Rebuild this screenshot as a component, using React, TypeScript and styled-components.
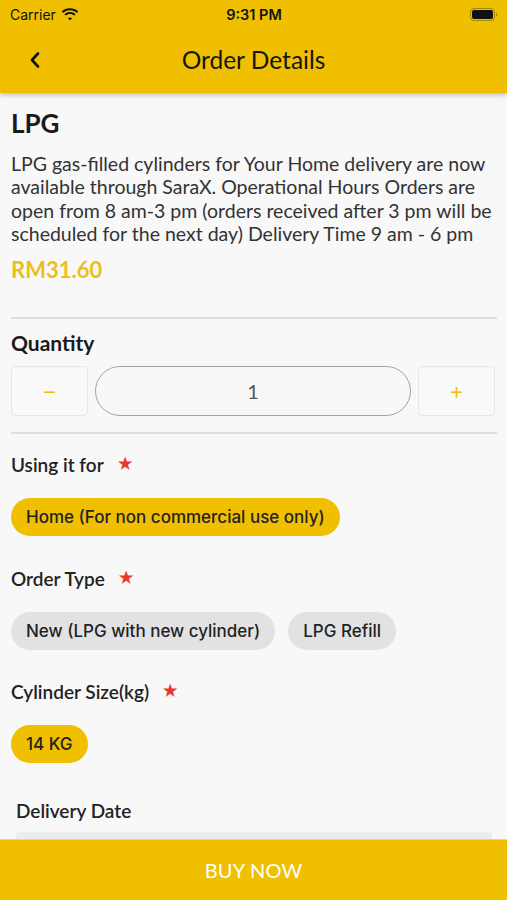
import * as React from 'react';
import styled, { createGlobalStyle } from 'styled-components';

const Color = {
  accent: '#efbf00',
  price: '#ebbf1a',
  bg: '#f8f8f8',
  text: '#222222',
  body: '#333333',
  divider: '#dedede',
  chip: '#e2e2e2',
  star: '#e8392f',
};

const GlobalStyle = createGlobalStyle`
  html, body {
    margin: 0;
    padding: 0;
    background: ${Color.bg};
  }
  * {
    box-sizing: border-box;
  }
`;

const S = {
  Screen: styled.div`
    width: 507px;
    height: 900px;
    display: flex;
    flex-direction: column;
    overflow: hidden;
    background: ${Color.bg};
    font-family: Lato, 'Noto Sans', sans-serif;
    color: ${Color.text};
  `,
  Header: styled.header`
    flex: 0 0 93px;
    background: ${Color.accent};
    box-shadow: 0 2px 5px rgba(0, 0, 0, 0.25);
    display: flex;
    flex-direction: column;
    position: relative;
    z-index: 1;
  `,
  StatusBar: styled.div`
    height: 28px;
    padding: 0 9px 0 10px;
    display: grid;
    grid-template-columns: 1fr auto 1fr;
    align-items: center;
    font-family: Inter, 'Liberation Sans', sans-serif;
    font-size: 14px;
    color: #111;
  `,
  Carrier: styled.div`
    display: flex;
    align-items: center;
    gap: 5px;
  `,
  Clock: styled.div`
    font-weight: 600;
    font-size: 14.5px;
  `,
  Battery: styled.div`
    justify-self: end;
    display: flex;
    align-items: center;
  `,
  NavBar: styled.div`
    flex: 1;
    display: grid;
    grid-template-columns: 70px 1fr 70px;
    align-items: center;
    padding-bottom: 2px;
  `,
  BackButton: styled.div`
    display: flex;
    align-items: center;
    justify-content: center;
  `,
  Title: styled.h1`
    margin: 0;
    text-align: center;
    font-weight: 400;
    font-size: 24.5px;
    color: #151515;
  `,
  Content: styled.main`
    flex: 1;
    overflow: hidden;
    padding: 0 10px 0 11px;
  `,
  ProductName: styled.h2`
    margin: 14px 0 0;
    font-size: 26px;
    font-weight: 700;
    line-height: 32px;
    color: #1a1a1a;
  `,
  Description: styled.p`
    margin: 13px 0 0;
    font-size: 19.5px;
    line-height: 23.4px;
    color: ${Color.body};
  `,
  Price: styled.div`
    margin-top: 10px;
    font-size: 22px;
    font-weight: 700;
    line-height: 28px;
    color: ${Color.price};
  `,
  Divider: styled.hr<{ $gap: number }>`
    border: none;
    height: 2px;
    background: ${Color.divider};
    margin: ${({ $gap }) => $gap}px 0 0;
  `,
  SectionTitle: styled.div`
    margin-top: 10px;
    font-size: 21px;
    font-weight: 700;
    line-height: 28px;
    color: #1a1a1a;
  `,
  Stepper: styled.div`
    margin-top: 9px;
    padding-right: 2px;
    display: flex;
    gap: 7px;
    align-items: center;
  `,
  StepButton: styled.div`
    flex: 0 0 77px;
    height: 50px;
    border: 1px solid #e6e6e6;
    border-radius: 4px;
    background: #f9f9f9;
    display: flex;
    align-items: center;
    justify-content: center;
    color: ${Color.accent};
    font-family: Inter, 'Liberation Sans', sans-serif;
    font-size: 24px;
    font-weight: 300;
  `,
  QtyField: styled.div`
    flex: 1;
    height: 50px;
    border: 1.5px solid #a3a3a3;
    border-radius: 25px;
    display: flex;
    align-items: center;
    justify-content: center;
    font-size: 20px;
    color: #555;
  `,
  FieldLabel: styled.div<{ $indent?: number }>`
    display: flex;
    align-items: center;
    gap: 14px;
    padding-left: ${({ $indent }) => $indent ?? 0}px;
    font-size: 19px;
    font-weight: 600;
    line-height: 24px;
    color: #222;
  `,
  Star: styled.span`
    color: ${Color.star};
    font-size: 16px;
    line-height: 1;
    position: relative;
    top: -2px;
  `,
  Field: styled.section<{ $top: number }>`
    margin-top: ${({ $top }) => $top}px;
  `,
  ChipRow: styled.div`
    margin-top: 21px;
    display: flex;
    gap: 13px;
  `,
  Chip: styled.div<{ $selected?: boolean }>`
    height: 38px;
    padding: 0 15px;
    border-radius: 19px;
    display: flex;
    align-items: center;
    background: ${({ $selected }) => ($selected ? Color.accent : Color.chip)};
    font-family: Inter, 'Liberation Sans', sans-serif;
    font-size: 17px;
    font-weight: 500;
    color: #222;
    white-space: nowrap;
  `,
  DateInput: styled.div`
    margin: 9px 5px 0;
    height: 40px;
    border-radius: 4px;
    background: #ececec;
  `,
  BuyBar: styled.button`
    flex: 0 0 61px;
    border: none;
    border-top: 1px solid #f3d66a;
    background: ${Color.accent};
    color: #fff;
    font-family: Lato, 'Noto Sans', sans-serif;
    font-size: 20px;
    letter-spacing: 0.2px;
  `,
};

const Wifi = () => (
  <svg width="18" height="13" viewBox="0 0 18 13">
    <path d="M9 2.2c2.7 0 5.1 1 6.9 2.7l1.3-1.4C15.1 1.5 12.2.3 9 .3S2.9 1.5.8 3.5l1.3 1.4C3.9 3.2 6.3 2.2 9 2.2z" fill="#111" />
    <path d="M9 5.9c1.7 0 3.2.6 4.3 1.7l1.3-1.4C13.2 4.8 11.2 4 9 4S4.8 4.8 3.4 6.2l1.3 1.4C5.8 6.5 7.3 5.9 9 5.9z" fill="#111" />
    <path d="M9 9.5c.8 0 1.5.3 2 .8L9 12.6 7 10.3c.5-.5 1.2-.8 2-.8z" fill="#111" />
  </svg>
);

const BatteryIcon = () => (
  <svg width="28" height="13" viewBox="0 0 28 13">
    <rect x="0.5" y="0.5" width="24" height="12" rx="3.5" fill="none" stroke="#6b5a00" strokeOpacity="0.55" />
    <rect x="2" y="2" width="21" height="9" rx="2" fill="#111" />
    <path d="M26 4.5v4c.8-.3 1.3-1.1 1.3-2s-.5-1.7-1.3-2z" fill="#6b5a00" fillOpacity="0.55" />
  </svg>
);

const Chevron = () => (
  <svg width="12" height="18" viewBox="0 0 12 18">
    <path d="M9 2.5 3 9l6 6.5" fill="none" stroke="#111" strokeWidth="2.6" strokeLinecap="round" strokeLinejoin="round" />
  </svg>
);

type FieldProps = {
  label: string;
  top: number;
  options: Array<{ label: string; selected?: boolean }>;
};

const ChoiceField = ({ label, top, options }: FieldProps) => (
  <S.Field $top={top}>
    <S.FieldLabel>
      {label}
      <S.Star>★</S.Star>
    </S.FieldLabel>
    <S.ChipRow>
      {options.map((o) => (
        <S.Chip key={o.label} $selected={o.selected}>
          {o.label}
        </S.Chip>
      ))}
    </S.ChipRow>
  </S.Field>
);

const App = () => {
  const [qty, setQty] = React.useState(1);

  return (
    <S.Screen>
      <GlobalStyle />
      <S.Header>
        <S.StatusBar>
          <S.Carrier>
            Carrier
            <Wifi />
          </S.Carrier>
          <S.Clock>9:31 PM</S.Clock>
          <S.Battery>
            <BatteryIcon />
          </S.Battery>
        </S.StatusBar>
        <S.NavBar>
          <S.BackButton>
            <Chevron />
          </S.BackButton>
          <S.Title>Order Details</S.Title>
          <div />
        </S.NavBar>
      </S.Header>

      <S.Content>
        <S.ProductName>LPG</S.ProductName>
        <S.Description>
          LPG gas-filled cylinders for Your Home delivery are now available
          through SaraX. Operational Hours Orders are open from 8 am-3 pm
          (orders received after 3 pm will be scheduled for the next day)
          Delivery Time 9 am - 6 pm
        </S.Description>
        <S.Price>RM31.60</S.Price>

        <S.Divider $gap={33} />
        <S.SectionTitle>Quantity</S.SectionTitle>
        <S.Stepper>
          <S.StepButton onClick={() => setQty((q) => Math.max(1, q - 1))}>−</S.StepButton>
          <S.QtyField>{qty}</S.QtyField>
          <S.StepButton onClick={() => setQty((q) => q + 1)}>+</S.StepButton>
        </S.Stepper>
        <S.Divider $gap={16} />

        <ChoiceField
          label="Using it for"
          top={19}
          options={[{ label: 'Home (For non commercial use only)', selected: true }]}
        />
        <ChoiceField
          label="Order Type"
          top={31}
          options={[{ label: 'New (LPG with new cylinder)' }, { label: 'LPG Refill' }]}
        />
        <ChoiceField
          label="Cylinder Size(kg)"
          top={30}
          options={[{ label: '14 KG', selected: true }]}
        />

        <S.Field $top={36}>
          <S.FieldLabel $indent={5}>Delivery Date</S.FieldLabel>
          <S.DateInput />
        </S.Field>
      </S.Content>

      <S.BuyBar>BUY NOW</S.BuyBar>
    </S.Screen>
  );
};

export default App;
